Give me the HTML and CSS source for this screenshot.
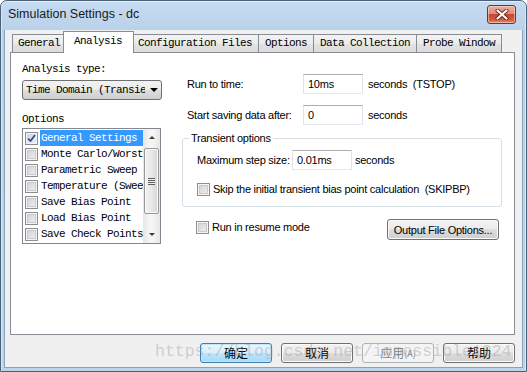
FILE: index.html
```html
<!DOCTYPE html>
<html lang="en">
<head>
<meta charset="UTF-8">
<title>Simulation Settings - dc</title>
<link rel="stylesheet" href="styles.css">
</head>
<body>
<div class="window">
  <div class="titlebar">
    <span class="title">Simulation Settings - dc</span>
    <div class="close">
      <svg width="14" height="11" viewBox="0 0 14 11">
        <path d="M2.5 1.5 L11.5 9.5 M11.5 1.5 L2.5 9.5" stroke="#6b2418" stroke-width="4" stroke-linecap="round"/>
        <path d="M2.5 1.5 L11.5 9.5 M11.5 1.5 L2.5 9.5" stroke="#ffffff" stroke-width="2.2" stroke-linecap="round"/>
      </svg>
    </div>
  </div>

  <div class="client">
    <div class="tabs mono">
      <div class="tab">General</div>
      <div class="tab active">Analysis</div>
      <div class="tab">Configuration Files</div>
      <div class="tab">Options</div>
      <div class="tab">Data Collection</div>
      <div class="tab">Probe Window</div>
    </div>

    <div class="panel">
      <div class="left mono">
        <div class="mlabel">Analysis type:</div>
        <div class="combo">
          <span class="combo-text">Time Domain (Transient)</span>
          <span class="combo-arrow"></span>
        </div>
        <div class="mlabel options-label">Options</div>
        <div class="listbox">
          <div class="items">
            <div class="item"><span class="cb checked"><svg width="11" height="11" viewBox="0 0 11 11"><path d="M2 5.5 L4.5 8 L9 2" fill="none" stroke="#34498a" stroke-width="1.7"/></svg></span><span class="item-text selected">General Settings</span></div>
            <div class="item"><span class="cb"></span><span class="item-text">Monte Carlo/Worst Case</span></div>
            <div class="item"><span class="cb"></span><span class="item-text">Parametric Sweep</span></div>
            <div class="item"><span class="cb"></span><span class="item-text">Temperature (Sweep)</span></div>
            <div class="item"><span class="cb"></span><span class="item-text">Save Bias Point</span></div>
            <div class="item"><span class="cb"></span><span class="item-text">Load Bias Point</span></div>
            <div class="item"><span class="cb"></span><span class="item-text">Save Check Points</span></div>
          </div>
          <div class="vscroll">
            <div class="sb-arrow up"></div>
            <div class="sb-track">
              <div class="sb-thumb"><span class="grip"></span></div>
            </div>
            <div class="sb-arrow down"></div>
          </div>
        </div>
      </div>

      <div class="right ui">
        <div class="row first">
          <span class="lbl">Run to time:</span>
          <span class="tb">10ms</span>
          <span class="unit">seconds  (TSTOP)</span>
        </div>
        <div class="row">
          <span class="lbl">Start saving data after:</span>
          <span class="tb">0</span>
          <span class="unit">seconds</span>
        </div>

        <fieldset class="group">
          <legend>Transient options</legend>
          <div class="row step">
            <span class="lbl">Maximum step size:</span>
            <span class="tb">0.01ms</span>
            <span class="unit">seconds</span>
          </div>
          <div class="check skip"><span class="cb"></span>Skip the initial transient bias point calculation  (SKIPBP)</div>
        </fieldset>

        <div class="bottom-row">
          <div class="check"><span class="cb"></span>Run in resume mode</div>
          <div class="btn">Output File Options...</div>
        </div>
      </div>
    </div>

    <div class="dialog-buttons cjk">
      <div class="btn default">确定</div>
      <div class="btn">取消</div>
      <div class="btn disabled">应用<span class="acc">(A)</span></div>
      <div class="btn">帮助</div>
    </div>

    <div class="watermark">https://blog.csdn.net/impossible1224</div>
  </div>
</div>
</body>
</html>
```

FILE: styles.css
```css
* {
  box-sizing: border-box;
}
body {
  margin: 0;
  width: 527px;
  height: 372px;
  overflow: hidden;
  background: #fff;
}

.mono {
  font-family: "Liberation Mono", monospace;
  font-size: 11px;
  letter-spacing: -0.6px;
  color: #000;
}
.ui {
  font-family: "Liberation Sans", Arial, sans-serif;
  font-size: 11px;
  letter-spacing: -0.25px;
  color: #000;
}
.cjk {
  font-family: "Noto Sans CJK SC", sans-serif;
  font-size: 12px;
}

/* window frame */
.window {
  height: 372px;
  display: flex;
  flex-direction: column;
  padding: 0 3px 3px 3px;
  border: 1px solid #4a6178;
  border-radius: 7px 7px 0 0;
  background: linear-gradient(#c6dbf0, #b9d1ea 30px, #bcd4ec);
  box-shadow: inset 0 1px 0 #e6f0fa, inset 1px 0 0 #dae7f4, inset -1px 0 0 #dae7f4;
}
.titlebar {
  height: 29px;
  display: flex;
  padding: 4px 7px 0 4px;
}
.title {
  flex: 1;
  margin-top: 2px;
  font-family: "Liberation Sans", Arial, sans-serif;
  font-size: 12.5px;
  color: #1a1a1a;
}
.close {
  width: 29px;
  height: 19px;
  display: flex;
  align-items: center;
  justify-content: center;
  border: 1px solid #7a3023;
  border-radius: 3px;
  background: linear-gradient(#eab0a3 0%, #dc8c7b 45%, #c8472f 50%, #cf5b41 80%, #de8a6c 100%);
  box-shadow: inset 0 0 0 1px rgba(255, 225, 215, 0.55);
}

.client {
  flex: 1;
  position: relative;
  padding: 1px 7px 0 5px;
  background: #f0f0f0;
  border: 1px solid #8aa2bb;
  border-top: none;
}

/* tabs */
.tabs {
  display: flex;
  align-items: flex-end;
  height: 21px;
  padding-left: 2px;
}
.tab {
  height: 18px;
  line-height: 16px;
  padding: 0 6px 0 6px;
  margin-left: -1px;
  border: 1px solid #898c95;
  border-bottom: none;
  background: linear-gradient(#f3f3f3, #ebebeb 50%, #e2e2e2 50%, #dcdcdc);
  white-space: nowrap;
}
.tab:first-child {
  margin-left: 0;
  padding: 0 4px 0 5px;
}
.tab.active {
  position: relative;
  z-index: 1;
  height: 22px;
  line-height: 18px;
  margin: 0 -2px -1px -2px;
  padding: 0 11px 0 10px;
  background: #fff;
}

.panel {
  height: 283px;
  display: grid;
  grid-template-columns: 140px 320px;
  column-gap: 20px;
  align-items: start;
  padding-left: 11px;
  background: #fff;
  border: 1px solid #898c95;
}

/* left column */
.left {
  padding-top: 9px;
}
.mlabel {
  line-height: 14px;
  white-space: nowrap;
}
.combo {
  display: flex;
  align-items: center;
  height: 20px;
  margin-top: 4px;
  padding-left: 3px;
  border: 1px solid #707070;
  border-radius: 3px;
  background: linear-gradient(#f2f2f2, #ebebeb 50%, #dddddd 50%, #cfcfcf);
}
.combo-text {
  width: 119px;
  overflow: hidden;
  white-space: nowrap;
}
.combo-arrow {
  margin-left: 5px;
  border-left: 4px solid transparent;
  border-right: 4px solid transparent;
  border-top: 4px solid #000;
}
.options-label {
  margin-top: 12px;
}
.listbox {
  display: flex;
  width: 139px;
  height: 116px;
  margin-top: 2px;
  border: 1px solid #828790;
  background: #fff;
}
.items {
  width: 120px;
  padding-top: 1px;
  overflow: hidden;
}
.item {
  display: flex;
  align-items: center;
  height: 16px;
  padding-left: 2px;
}
.item .cb {
  margin-right: 2px;
}
.item-text {
  flex: 1;
  line-height: 16px;
  padding-left: 1px;
  white-space: nowrap;
  overflow: hidden;
}
.item-text.selected {
  background: #3399ff;
  color: #fff;
}

/* checkbox */
.cb {
  flex: none;
  display: inline-flex;
  align-items: center;
  justify-content: center;
  width: 13px;
  height: 13px;
  border: 1px solid #8e8f8f;
  background: linear-gradient(135deg, #cdcfd2, #f3f3f3);
  box-shadow: inset 0 0 0 1px #f4f4f4, inset 0 0 0 2px #c8cacd;
}
.cb.checked {
  background: linear-gradient(135deg, #c6d3e8, #eef2f8);
  box-shadow: inset 0 0 0 1px #f4f4f4;
}

/* scrollbar */
.vscroll {
  display: flex;
  flex-direction: column;
  width: 17px;
  background: linear-gradient(to right, #e6e6e6, #f5f5f5 40%, #f5f5f5 60%, #e6e6e6);
}
.sb-arrow {
  height: 17px;
  display: flex;
  align-items: center;
  justify-content: center;
}
.sb-arrow::after {
  content: "";
  border-left: 3px solid transparent;
  border-right: 3px solid transparent;
}
.sb-arrow.up::after {
  border-bottom: 3px solid #3b3b3b;
}
.sb-arrow.down::after {
  border-top: 3px solid #3b3b3b;
}
.sb-track {
  flex: 1;
  padding: 2px 0 0 1px;
}
.sb-thumb {
  width: 15px;
  height: 66px;
  display: flex;
  align-items: center;
  justify-content: center;
  border: 1px solid #979797;
  border-radius: 2px;
  background: linear-gradient(to right, #f2f2f2, #e8e8e8 50%, #d6d6d6);
  box-shadow: inset 0 0 0 1px #fafafa;
}
.grip {
  width: 7px;
  height: 7px;
  background: repeating-linear-gradient(#5e5e5e 0 1px, #eeeeee 1px 2px);
}

/* right column */
.right {
  width: 320px;
}
.row {
  display: flex;
  align-items: center;
  height: 20px;
  padding-left: 5px;
  margin-top: 11px;
}
.row.first {
  margin-top: 21px;
}
.lbl {
  width: 116px;
  white-space: nowrap;
}
.tb {
  width: 60px;
  height: 20px;
  line-height: 18px;
  padding-left: 4px;
  border: 1px solid #abadb3;
  border-color: #abadb3 #e2e3ea #e3e9ef #e2e3ea;
  background: #fff;
}
.unit {
  margin-left: 5px;
  white-space: pre;
}

.group {
  margin: 6px 0 0 0;
  min-width: 0;
  padding: 0 0 10px 14px;
  border: 1px solid #d5dfe5;
  border-radius: 3px;
}
.group legend {
  margin-left: -8px;
  padding: 0 2px;
  line-height: 14px;
}
.row.step {
  margin-top: 5px;
  padding-left: 0;
}
.row.step .lbl {
  width: 95px;
}
.row.step .unit {
  margin-left: 3px;
}
.check {
  display: flex;
  align-items: center;
  height: 14px;
  white-space: pre;
}
.check .cb {
  margin-right: 3px;
}
.check.skip {
  margin-top: 12px;
}

.bottom-row {
  display: flex;
  align-items: flex-start;
  justify-content: space-between;
  margin-top: 12px;
  padding: 0 3px 0 14px;
}
.bottom-row .check {
  margin-top: 1px;
}

/* buttons */
.btn {
  display: flex;
  align-items: center;
  justify-content: center;
  height: 21px;
  width: 112px;
  border: 1px solid #707070;
  border-radius: 3px;
  background: linear-gradient(#f2f2f2, #ebebeb 50%, #dddddd 50%, #cfcfcf);
  box-shadow: inset 0 0 0 1px #fbfbfb;
  white-space: nowrap;
}
.dialog-buttons {
  display: flex;
  justify-content: flex-end;
  gap: 9px;
  margin-top: 8px;
}
.dialog-buttons .btn {
  width: 72px;
  height: 20px;
  line-height: 1;
}
.btn.default {
  border-color: #3c7fb1;
  background: linear-gradient(#eaf6fd, #d9f0fc 50%, #bee6fd 50%, #a7d9f5);
  box-shadow: inset 0 0 0 1px #c2e6fa;
}
.btn.disabled {
  color: #838383;
  border-color: #adb2b5;
  background: #f4f4f4;
  box-shadow: none;
}
.acc {
  font-size: 9px;
}

.watermark {
  position: absolute;
  left: 150px;
  top: 312px;
  font-family: "Liberation Mono", monospace;
  font-size: 16.5px;
  line-height: 20px;
  color: rgba(150, 150, 150, 0.4);
  white-space: nowrap;
  pointer-events: none;
}
```
